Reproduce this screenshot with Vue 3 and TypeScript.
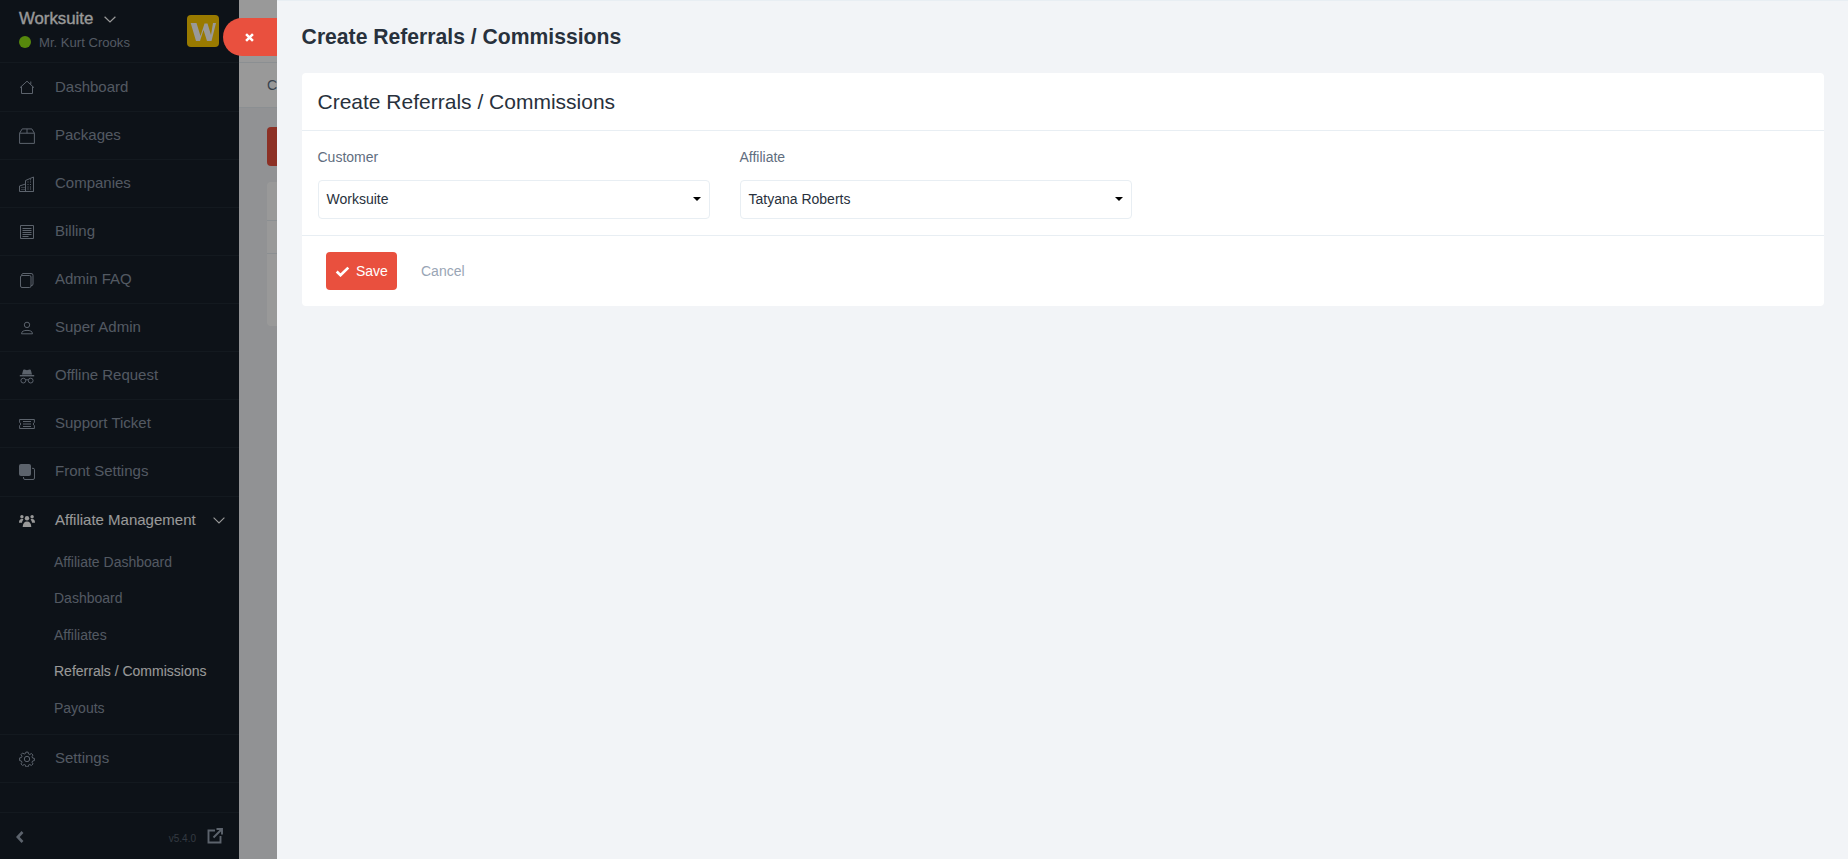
<script setup lang="ts">
interface NavItem {
  label: string
  icon: string[]
  fill?: string[]
}

const topItems: NavItem[] = [
  { label: 'Dashboard', icon: ['M1 8.700 8 2.200l7 6.500', 'M2.500 7.500v7h11v-7', 'M11.800 2.500v2.700'] },
  { label: 'Packages', icon: ['M.6 5.200h14.800v10.200H.6z', 'M.6 5.200 3.200.9h9.600l2.600 4.300', 'M8 .9v4.300'] },
  { label: 'Companies', icon: ['M.5 15.500V10l6-2v7.500', 'M6.500 15.500V4.500l8-3.500v14.500z', 'M.5 15.500h14', 'M2.500 11.500h1M2.500 13.500h1M4.500 11.500h1M4.500 13.500h1', 'M8.500 6h1M11 6h1M8.500 8.500h1M11 8.500h1M8.500 11h1M11 11h1M8.500 13h1M11 13h1M11 3.800h1'] },
  { label: 'Billing', icon: ['M1.500 1.500h13v13h-13z', 'M3.500 4.500h9M3.500 6.500h9M3.500 8.500h9M3.500 10.500h9M3.500 12.500h6'] },
  { label: 'Admin FAQ', icon: ['M3 3.500h7.500a1.500 1.500 0 0 1 1.500 1.500v9a1.500 1.500 0 0 1-1.500 1.500H3A1.500 1.500 0 0 1 1.500 14V5A1.500 1.500 0 0 1 3 3.500z', 'M4 1.500h8A1.800 1.800 0 0 1 14 3.300V12a1.600 1.600 0 0 1-2 1.500', 'M2.500 3.600A2 2 0 0 1 4 1.500'] },
  { label: 'Super Admin', icon: ['M8 2.200a2.700 2.700 0 1 1 0 5.400a2.700 2.700 0 0 1 0-5.400z', 'M2.500 13.800c0-2.600 2.400-3.400 5.500-3.400s5.500.8 5.500 3.400z'] },
  {
    label: 'Offline Request',
    icon: ['M4.300 10.200a2.400 2.400 0 1 1 0 4.800a2.400 2.400 0 0 1 0-4.800zM11.700 10.200a2.400 2.400 0 1 1 0 4.800a2.400 2.400 0 0 1 0-4.800zM6.600 12c.9-.4 1.900-.4 2.800 0'],
    fill: ['M3 6.500 4.100 2.300c.2-.7.7-.9 1.300-.7L8 2.300l2.600-.7c.6-.2 1.100 0 1.300.7L13 6.500z', 'M.8 7h14.400v1.400H.8z']
  },
  { label: 'Support Ticket', icon: ['M.6 3.500h14.800v3a1.600 1.600 0 0 0 0 3v3H.6v-3a1.600 1.600 0 0 0 0-3z', 'M4 5.500h8M4 8h8M4 10.500h8'] }
]

const subItems = ['Affiliate Dashboard', 'Dashboard', 'Affiliates', 'Referrals / Commissions', 'Payouts']
</script>

<template>
  <div class="page">
    <aside class="sidebar">
      <div class="brand">
        <div class="brand-text">
          <div class="brand-name">
            <span>Worksuite</span>
            <svg class="brand-caret" viewBox="0 0 12 7"><path d="M.6.7 6 6l5.400-5.300" /></svg>
          </div>
          <div class="brand-user"><i class="dot"></i><span>Mr. Kurt Crooks</span></div>
        </div>
        <div class="logo">
          <svg viewBox="0 0 32 32"><path d="M3.700 8h5.800l4 13 4-12.500h3l3.500 11.500L26 8h3l-4.500 18H20l-3.500-11L13 26H9z" /></svg>
        </div>
      </div>

      <nav class="nav">
        <a v-for="item in topItems" :key="item.label" class="nav-row">
          <svg class="nav-icon" viewBox="0 0 16 16">
            <path v-for="d in item.fill" :key="d" class="solid" :d="d" />
            <path v-for="d in item.icon" :key="d" :d="d" />
          </svg>
          <span>{{ item.label }}</span>
        </a>
        <a class="nav-row tall">
          <svg class="nav-icon" viewBox="0 0 16 16">
            <rect class="solid" x="0" y="0" width="12" height="12" rx="2" />
            <path d="M13 4.300h1a1.500 1.500 0 0 1 1.500 1.500v8.200a1.500 1.500 0 0 1-1.500 1.500H6A1.500 1.500 0 0 1 4.500 14v-1" />
          </svg>
          <span>Front Settings</span>
        </a>

        <div class="group">
          <a class="group-head">
            <svg class="nav-icon" viewBox="0 0 16 16">
              <circle class="solid" cx="8" cy="5.200" r="2.200" />
              <circle class="solid" cx="2.900" cy="3.800" r="1.700" />
              <circle class="solid" cx="13.100" cy="3.800" r="1.700" />
              <path class="solid" d="M3.700 14c0-3.600 1.700-5.600 4.300-5.600s4.300 2 4.300 5.600z" />
              <path class="solid" d="M0 9.800c0-2.400.9-3.700 2.900-3.700.6 0 1.100.1 1.500.4-.8.800-1.300 2-1.500 3.300z" />
              <path class="solid" d="M16 9.800c0-2.400-.9-3.700-2.900-3.700-.6 0-1.100.1-1.500.4.800.8 1.300 2 1.500 3.300z" />
            </svg>
            <span>Affiliate Management</span>
            <svg class="group-caret" viewBox="0 0 12 7"><path d="M.6.7 6 6l5.400-5.300" /></svg>
          </a>
          <ul class="sub">
            <li v-for="sub in subItems" :key="sub" :class="{ active: sub === 'Referrals / Commissions' }">{{ sub }}</li>
          </ul>
        </div>

        <a class="nav-row">
          <svg class="nav-icon" viewBox="0 0 16 16">
            <circle cx="8" cy="8" r="2.700" />
            <path d="M6.900 1.100h2.200l.4 1.800 1.300.6 1.600-1 1.600 1.600-1 1.600.6 1.300 1.800.4v2.200l-1.800.4-.6 1.300 1 1.600-1.600 1.600-1.600-1-1.300.6-.4 1.800H6.900l-.4-1.800-1.300-.6-1.600 1-1.600-1.600 1-1.600-.6-1.300-1.800-.4V6.900l1.800-.4.6-1.300-1-1.600 1.600-1.600 1.600 1 1.300-.6z" />
          </svg>
          <span>Settings</span>
        </a>
      </nav>

      <div class="side-foot">
        <svg class="foot-back" viewBox="0 0 8 12"><path d="M6.500 1 1.800 6l4.700 5" /></svg>
        <span class="version">v5.4.0</span>
        <svg class="foot-link" viewBox="0 0 16 16">
          <path d="M8 2.500H1.500v12h12V8" />
          <path d="M6.500 9.500 15 1M9.500 1H15v5.500" />
        </svg>
      </div>
    </aside>

    <main class="backdrop-page">
      <div class="top-bar"></div>
      <div class="tab-bar"><span>Create</span></div>
      <div class="back-content">
        <div class="back-btn"></div>
        <div class="back-card">
          <div class="back-line first"></div>
          <div class="back-line second"></div>
        </div>
      </div>
    </main>

    <div class="overlay"></div>

    <button class="close-tab" type="button" aria-label="Close">
      <svg viewBox="0 0 10 10"><path d="M1.200 1.200l7.600 7.600M8.800 1.200l-7.600 7.600" /></svg>
    </button>

    <section class="drawer">
      <h1 class="drawer-title">Create Referrals / Commissions</h1>
      <div class="form-card">
        <h2 class="card-title">Create Referrals / Commissions</h2>
        <div class="card-fields">
          <div class="field">
            <label>Customer</label>
            <div class="select"><span>Worksuite</span><i class="select-caret"></i></div>
          </div>
          <div class="field">
            <label>Affiliate</label>
            <div class="select"><span>Tatyana Roberts</span><i class="select-caret"></i></div>
          </div>
        </div>
        <div class="card-actions">
          <button class="save" type="button">
            <svg viewBox="0 0 14 11"><path d="M1.200 5.500 5 9.200 12.800 1.600" /></svg>
            <span>Save</span>
          </button>
          <a class="cancel">Cancel</a>
        </div>
      </div>
    </section>
  </div>
</template>

<style>
html, body { margin: 0; padding: 0; }
</style>

<style scoped>
* { box-sizing: border-box; }
.page {
  position: relative;
  display: flex;
  width: 1848px;
  height: 859px;
  overflow: hidden;
  background: #f2f4f7;
  font-family: "Liberation Sans", Arial, sans-serif;
  color: #28313c;
}

/* sidebar */
.sidebar {
  width: 239px;
  flex: none;
  display: flex;
  flex-direction: column;
  background: #171f29;
  color: #8a95a4;
}
.brand {
  height: 63px;
  flex: none;
  display: flex;
  justify-content: space-between;
  padding: 15px 20px 0 19px;
  border-bottom: 1px solid #212a35;
}
.brand-name {
  display: flex;
  align-items: center;
  height: 20px;
  margin-top: -6px;
  font-size: 16.800px;
  color: #fff;
  -webkit-text-stroke: 0.3px #fff;
}
.brand-caret {
  width: 12px;
  height: 7px;
  margin-left: 11px;
  fill: none;
  stroke: #fff;
  stroke-width: 1.200;
}
.brand-user {
  display: flex;
  align-items: center;
  margin-top: 4px;
  font-size: 13.100px;
}
.brand-user span { margin-top: 2px; }
.dot {
  width: 12px;
  height: 12px;
  border-radius: 50%;
  background: #8fe315;
  margin-right: 8px;
}
.logo {
  width: 32px;
  height: 32px;
  border-radius: 4px;
  background: #ffcc00;
}
.logo svg { display: block; width: 32px; height: 32px; fill: #fff; }

.nav { flex: 1; display: flex; flex-direction: column; }
.nav-row, .group-head {
  display: flex;
  align-items: center;
  height: 48px;
  padding-left: 19px;
  font-size: 15px;
  flex: none;
}
.nav-row { border-bottom: 1px solid #212a35; }
.nav-row:first-child { height: 49px; }
.nav-row.tall { height: 49px; padding-bottom: 1px; }
.nav-row span, .group-head span { margin: 0 0 2px 20px; }
.nav-icon {
  width: 16px;
  height: 16px;
  flex: none;
  fill: none;
  stroke: #99a5b5;
  stroke-width: 1;
}
.nav-icon .solid { fill: #99a5b5; stroke: none; }
.group { border-bottom: 1px solid #212a35; padding-bottom: 8px; }
.group-head { color: #fff; height: 47px; padding-top: 0; }
.group-head .nav-icon .solid { fill: #fff; }
.group-caret {
  width: 12px;
  height: 7px;
  margin-left: auto;
  margin-right: 14px;
  fill: none;
  stroke: #fff;
  stroke-width: 1.100;
}
.sub { list-style: none; margin: -0.500px 0 0; padding: 0 0 0 54px; font-size: 14px; }
.sub li { height: 36.500px; line-height: 36.500px; }
.sub li.active { color: #fff; }

.side-foot {
  height: 47px;
  flex: none;
  display: flex;
  align-items: center;
  padding: 1px 16px 0 16px;
  border-top: 1px solid #212a35;
}
.foot-back { width: 8px; height: 12px; fill: none; stroke: #99a5b5; stroke-width: 2.600; }
.version { margin-left: auto; margin-top: 3px; font-size: 10px; color: #56606e; }
.foot-link { width: 16px; height: 16px; margin-left: 11px; margin-top: -1px; fill: none; stroke: #99a5b5; stroke-width: 1.900; }

/* page behind the overlay */
.backdrop-page { flex: 1; min-width: 0; }
.top-bar { height: 63px; background: #fff; border-bottom: 1px solid #e8eef3; }
.tab-bar {
  height: 45px;
  padding-left: 28px;
  background: #fff;
  border-bottom: 1px solid #e8eef3;
  font-size: 14px;
  line-height: 44px;
  color: #616e80;
}
.back-content { padding: 19px 0 0 28px; }
.back-btn { width: 120px; height: 39px; border-radius: 4px; background: #e9503e; }
.back-card {
  position: relative;
  width: 1000px;
  height: 144px;
  margin-top: 16px;
  border-radius: 4px;
  background: #fff;
}
.back-line { position: absolute; left: 0; right: 0; height: 1px; background: #e8eef3; }
.back-line.first { top: 38px; }
.back-line.second { top: 71px; }

/* overlay layers */
.overlay { position: absolute; inset: 0; background: rgba(0, 0, 0, 0.4); }
.close-tab {
  position: absolute;
  left: 223px;
  top: 18px;
  width: 60px;
  height: 38px;
  padding: 0;
  border: 0;
  border-radius: 19px 0 0 19px;
  background: #e9503e;
  display: block;
}
.close-tab svg {
  position: absolute;
  left: 21.500px;
  top: 14.500px;
  width: 9px;
  height: 9px;
  fill: none;
  stroke: #fff;
  stroke-width: 2.800;
}

/* drawer */
.drawer {
  position: absolute;
  left: 277px;
  top: 0;
  right: 0;
  bottom: 0;
  padding: 0 24px 0 25px;
  background: #f2f4f7;
  border-top: 1px solid #e8eef3;
}
.drawer-title {
  margin: 0 0 0 -0.400px;
  height: 72px;
  padding-top: 24px;
  font-size: 21.150px;
  line-height: 24px;
  font-weight: 700;
  color: #28313c;
}
.form-card { background: #fff; border-radius: 4px; height: 233px; }
.card-title {
  margin: 0;
  height: 58px;
  padding: 17px 15.500px 0;
  border-bottom: 1px solid #e8eef3;
  font-size: 21px;
  line-height: 24px;
  font-weight: 400;
  color: #28313c;
}
.card-fields {
  display: flex;
  gap: 30px;
  height: 105px;
  padding: 0 16px;
  border-bottom: 1px solid #e8eef3;
}
.field { width: 392px; }
.field label {
  display: block;
  padding-top: 18px;
  margin-left: -0.500px;
  font-size: 14px;
  line-height: 16px;
  color: #616e80;
}
.select {
  display: flex;
  align-items: center;
  justify-content: space-between;
  height: 39px;
  margin-top: 15px;
  padding: 0 8px 1.500px 7.500px;
  border: 1px solid #e8eef3;
  border-radius: 4px;
  font-size: 14px;
  color: #28313c;
}
.select-caret {
  width: 0;
  height: 0;
  border-left: 4px solid transparent;
  border-right: 4px solid transparent;
  border-top: 4px solid #000;
}
.card-actions { display: flex; align-items: center; padding: 16px 24px; }
.save {
  display: flex;
  align-items: center;
  width: 71px;
  height: 38px;
  padding: 0 0 0 9px;
  border: 0;
  border-radius: 4px;
  background: #e9503e;
  color: #fff;
  font: 14px "Liberation Sans", Arial, sans-serif;
}
.save svg { width: 15px; height: 11px; fill: none; stroke: #fff; stroke-width: 2.700; margin-right: 6px; }
.cancel { margin-left: 24px; margin-top: -1px; font-size: 14px; color: #99a5b5; }
</style>
